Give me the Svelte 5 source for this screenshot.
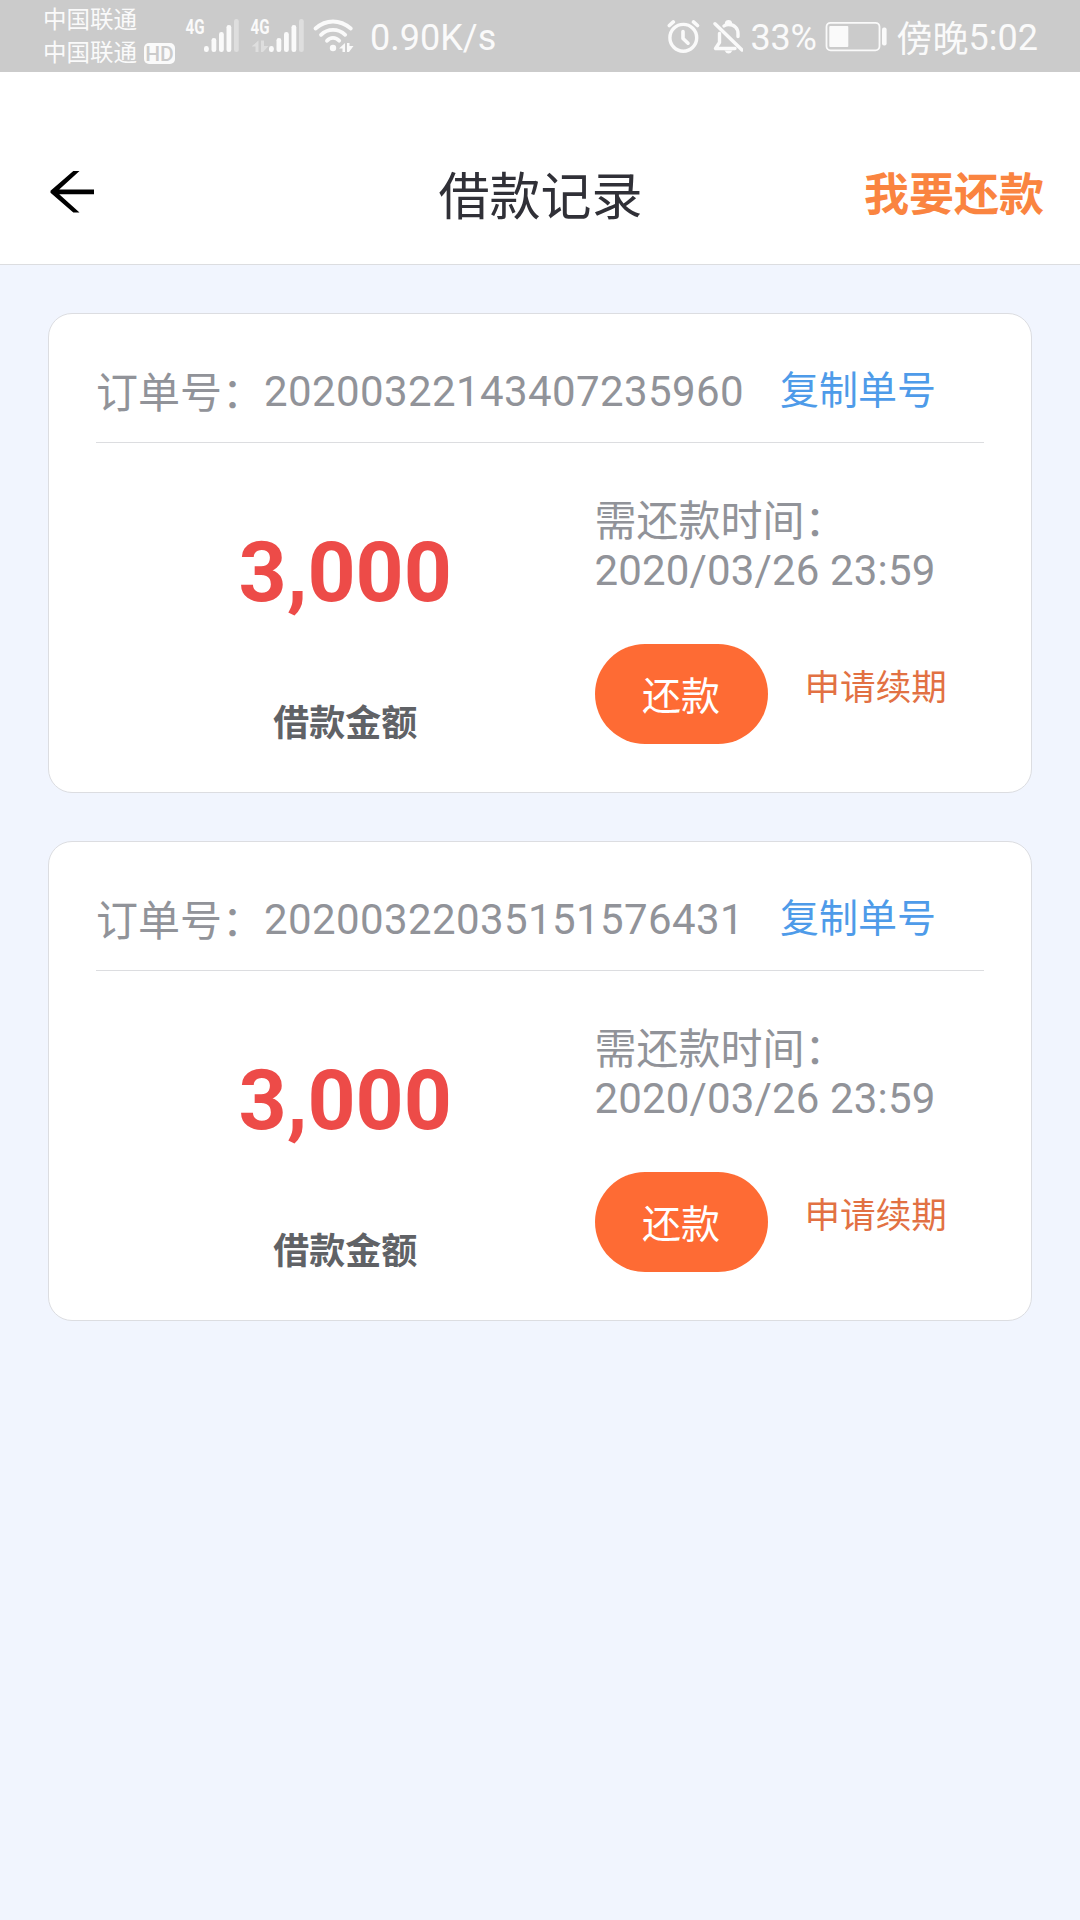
<!--
  @component LoanRecords
  @description Loan history screen: system status bar, page header and a
    list of order cards with amount, due time and the repay / renew actions.
-->
<script>
  const orders = [
    { id: '20200322143407235960', amount: '3,000', due: '2020/03/26 23:59' },
    { id: '20200322035151576431', amount: '3,000', due: '2020/03/26 23:59' },
  ];

  // Signal bar tops, the last bar is the inactive one
  const bars = [46, 38, 32, 25, 19];
</script>

{#snippet signal(withData)}
  <svg class="signal" width="56" height="72" viewBox="184 0 56 72">
    <text x="185.5" y="34" textLength="19" lengthAdjust="spacingAndGlyphs">4G</text>
    {#if withData}
      <path class="faint" d="M186.500 46.500l7-6v11.500h-3v-5.500zM196 40.500h3v5.500h4.500l-5.500 6h-2z" />
    {/if}
    {#each bars as top, i}
      <rect
        class:faint={i === 4}
        x={204 + i * 7.5}
        y={top}
        width="4.800"
        height={52 - top}
        rx="2.300"
      />
    {/each}
  </svg>
{/snippet}

<div class="screen">
  <div class="status">
    <div class="carriers">
      <span>中国联通</span>
      <span class="carrier-row">中国联通<b class="hd">HD</b></span>
    </div>
    <div class="signals">
      {@render signal(false)}
      {@render signal(true)}
    </div>
    <svg class="wifi" width="42" height="72" viewBox="312 0 42 72">
      <g fill="none" stroke="#fafafa" stroke-width="3.800" stroke-linecap="round">
        <path d="M315.500 28.500Q323.500 21.500 333 21.500T350.800 28.500" />
        <path d="M321 34.800Q326 29.800 333 29.800T345.200 34.800" />
        <path d="M327 40.700Q329.500 37.800 333 37.800T339.200 40.700" />
      </g>
      <circle cx="333" cy="48" r="3.200" />
      <path d="M339 48.500l6-5.500v9h-2.500v-3.500zM347 43h2.500v3h4l-4.500 6h-2z" />
    </svg>
    <span class="speed">0.90K/s</span>

    <div class="status-right">
      <svg width="34" height="72" viewBox="666 0 34 72">
        <g fill="none" stroke="#fafafa" stroke-linecap="round" stroke-linejoin="round">
          <circle cx="682.300" cy="37.800" r="13.400" stroke-width="3.400" />
          <path stroke-width="3.600" d="M682 31.500v7l5 4.700" />
          <path stroke-width="3.600" d="M668.300 25.500l4-3.600M696.500 25.500l-4-3.600" />
        </g>
      </svg>
      <svg width="30" height="72" viewBox="712 0 30 72">
        <g fill="none" stroke="#fafafa" stroke-width="3.400" stroke-linecap="round" stroke-linejoin="round">
          <path d="M714 23.700L741 50" />
          <path d="M718.500 33.500v9L714.500 48.500H734" />
          <path d="M723 26Q725 24.500 727.500 24.500C733.500 24.500 737 28.500 737 33.500v3" />
          <path d="M725.500 24Q725.500 21.700 727.500 21.700T729.500 24" />
        </g>
        <path d="M723.500 50.500h8q-1.500 3-4 3t-4-3z" />
      </svg>
      <span class="percent">33%</span>
      <svg width="62" height="72" viewBox="825 0 62 72">
        <rect x="826.500" y="22.800" width="53" height="27.500" rx="4" fill="none" stroke="#fafafa" stroke-width="1.800" />
        <rect x="829.300" y="26" width="19" height="21" rx="1" />
        <rect x="882" y="27.500" width="4.600" height="18" rx="2" />
      </svg>
      <span class="clock"><span class="cjk">傍晚</span>5:02</span>
    </div>
  </div>

  <header class="header">
    <button class="back" aria-label="返回">
      <svg width="46" height="44" viewBox="0 0 46 44">
        <path d="M23.300 1H29.500L9.200 19.400H44V24.200H9.200L29.500 42.500H23.300L0.500 22.800V20.800Z" />
      </svg>
    </button>
    <h1>借款记录</h1>
    <button class="repay-all">我要还款</button>
  </header>

  <main class="list">
    {#each orders as order (order.id)}
      <section class="card">
        <div class="card-head">
          <span class="order"><span class="cjk">订单号：</span><span class="num">{order.id}</span></span>
          <button class="copy">复制单号</button>
        </div>
        <div class="card-body">
          <div class="amount-col">
            <strong class="amount">{order.amount}</strong>
            <span class="amount-label">借款金额</span>
          </div>
          <div class="due-col">
            <span class="due-label">需还款时间：</span>
            <span class="due">{order.due}</span>
            <div class="actions">
              <button class="pay">还款</button>
              <button class="renew">申请续期</button>
            </div>
          </div>
        </div>
      </section>
    {/each}
  </main>
</div>

<style>
  :global(body) {
    background: #f1f5fe;
  }

  .screen {
    width: 1080px;
    min-height: 1920px;
    background: #f1f5fe;
    font-family: Roboto, "Noto Sans CJK SC", sans-serif;
  }

  button {
    padding: 0;
    border: none;
    background: none;
    font-family: inherit;
    white-space: nowrap;
  }

  svg {
    display: block;
    flex: none;
  }

  /* Han glyphs sit slightly below the Latin baseline */
  .cjk {
    line-height: 1;
    vertical-align: -2px;
  }

  .status {
    display: flex;
    height: 72px;
    box-sizing: border-box;
    padding: 0 42px 0 43px;
    background: #cbcbcb;
    color: #fafafa;
    fill: #fafafa;
    white-space: nowrap;
  }

  .carriers {
    display: flex;
    flex-direction: column;
    width: 141px;
    padding-top: 4px;
    font-size: 23.5px;
    line-height: 33px;
  }

  .carrier-row {
    display: flex;
    align-items: center;
  }

  .hd {
    width: 31px;
    height: 21px;
    margin-left: 7px;
    border-radius: 5px;
    background: #fafafa;
    color: #cbcbcb;
    font-size: 21px;
    font-weight: 500;
    line-height: 22px;
    text-align: center;
  }

  .signals {
    display: flex;
    gap: 9px;
  }

  .signal text {
    font-size: 21px;
    font-weight: 700;
  }

  .faint {
    opacity: 0.4;
  }

  .wifi {
    margin-left: 7px;
  }

  .speed,
  .percent,
  .clock {
    font-size: 36px;
    line-height: 76px;
  }

  .speed {
    margin-left: 16px;
  }

  .status-right {
    display: flex;
    margin-left: auto;
  }

  .status-right svg:nth-child(2) {
    margin-left: 12px;
  }

  .percent {
    width: 74px;
    margin-left: 8px;
    letter-spacing: -0.3px;
  }

  .clock {
    margin-left: 10px;
  }

  .header {
    display: grid;
    grid-template-columns: 178px 1fr 178px;
    align-items: center;
    height: 193px;
    box-sizing: border-box;
    padding: 50px 36px 0 50px;
    border-bottom: 1px solid #dcdde0;
    background: #fff;
  }

  .back {
    justify-self: start;
    padding-bottom: 2px;
  }

  h1 {
    margin: 0;
    padding: 9px 13px 0 0;
    color: #303037;
    font-size: 51px;
    font-weight: 400;
    line-height: 60px;
    text-align: center;
  }

  .repay-all {
    justify-self: end;
    padding-top: 6px;
    color: #fa8440;
    font-size: 45px;
    font-weight: 700;
    line-height: 60px;
  }

  .list {
    display: flex;
    flex-direction: column;
    gap: 48px;
    padding: 48px;
  }

  .card {
    height: 480px;
    box-sizing: border-box;
    padding: 0 47px;
    border: 1px solid #dcdde1;
    border-radius: 24px;
    background: #fff;
  }

  .card-head {
    display: flex;
    height: 129px;
    box-sizing: border-box;
    padding-top: 48px;
    border-bottom: 1px solid #dcdde0;
    line-height: 60px;
    white-space: nowrap;
  }

  .order {
    width: 684px;
    color: #919399;
    font-size: 42px;
  }

  .num {
    letter-spacing: 0.4px;
  }

  .copy {
    height: 58px;
    color: #4e9be9;
    font-size: 39px;
    line-height: 58px;
  }

  .card-body {
    display: flex;
  }

  .amount-col {
    display: flex;
    flex-direction: column;
    align-items: center;
    width: 498.5px;
    padding-top: 80px;
  }

  .amount {
    color: #ed4b48;
    font-size: 84px;
    line-height: 100px;
  }

  .amount-label {
    margin-top: 76px;
    color: #606266;
    font-size: 36px;
    font-weight: 700;
    line-height: 50px;
  }

  .due-col {
    display: flex;
    flex-direction: column;
    padding-top: 54px;
    color: #919399;
    font-size: 42px;
    line-height: 49px;
    white-space: nowrap;
  }

  .due {
    letter-spacing: 0.15px;
  }

  .actions {
    display: flex;
    gap: 37px;
    margin-top: 49px;
  }

  .pay {
    width: 173px;
    height: 100px;
    border-radius: 50px;
    background: #fe6b34;
    color: #fff;
    font-size: 39px;
    line-height: 106px;
  }

  .renew {
    height: 88px;
    color: #e27143;
    font-size: 35.6px;
    line-height: 88px;
  }
</style>
